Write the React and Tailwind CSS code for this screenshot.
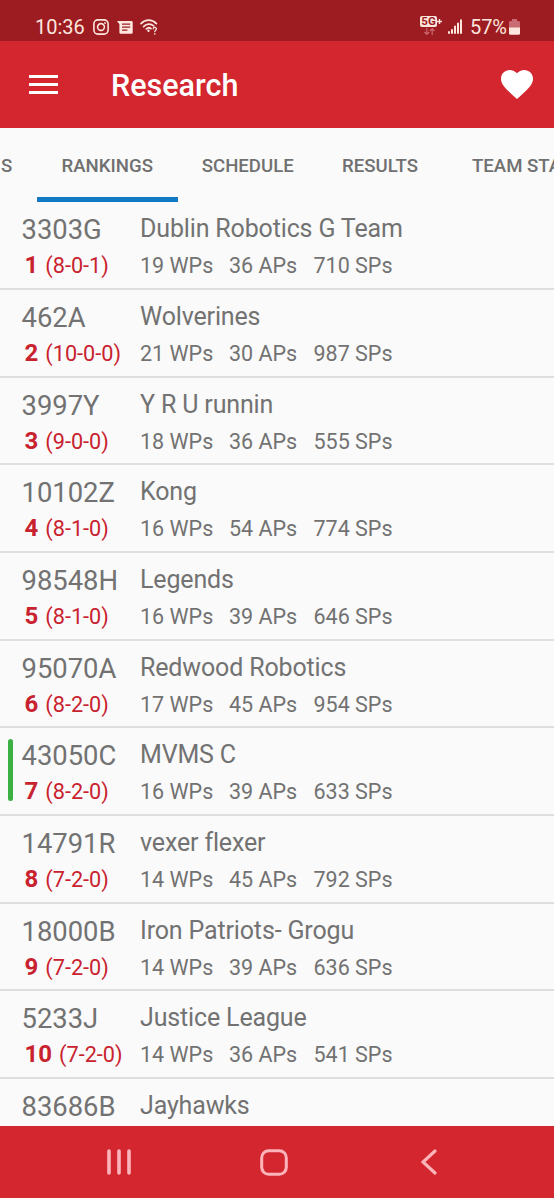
import React from 'react';

const tabs = [
  { label: 'S', className: 'w-[37px] pl-px' },
  { label: 'RANKINGS', className: 'w-[140.5px] justify-center', active: true },
  { label: 'SCHEDULE', className: 'w-[140.5px] justify-center' },
  { label: 'RESULTS', className: 'w-[124px] justify-center' },
  { label: 'TEAM STATS', className: 'w-[160px] pl-[30px]' },
];

const rankings = [
  { team: '3303G', name: 'Dublin Robotics G Team', record: '8-0-1', wp: 19, ap: 36, sp: 710 },
  { team: '462A', name: 'Wolverines', record: '10-0-0', wp: 21, ap: 30, sp: 987 },
  { team: '3997Y', name: 'Y R U runnin', record: '9-0-0', wp: 18, ap: 36, sp: 555 },
  { team: '10102Z', name: 'Kong', record: '8-1-0', wp: 16, ap: 54, sp: 774 },
  { team: '98548H', name: 'Legends', record: '8-1-0', wp: 16, ap: 39, sp: 646 },
  { team: '95070A', name: 'Redwood Robotics', record: '8-2-0', wp: 17, ap: 45, sp: 954 },
  { team: '43050C', name: 'MVMS C', record: '8-2-0', wp: 16, ap: 39, sp: 633, highlighted: true },
  { team: '14791R', name: 'vexer flexer', record: '7-2-0', wp: 14, ap: 45, sp: 792 },
  { team: '18000B', name: 'Iron Patriots- Grogu', record: '7-2-0', wp: 14, ap: 39, sp: 636 },
  { team: '5233J', name: 'Justice League', record: '7-2-0', wp: 14, ap: 36, sp: 541 },
  { team: '83686B', name: 'Jayhawks' },
];

const StatusBar = () => (
  <div className="flex h-[41px] shrink-0 items-start justify-between bg-[#9c1c22] pl-[35px] pr-[34px] pt-[15px] text-[#fde6dd]">
    <div className="flex items-start">
      <span className="w-[58px] text-[20px] leading-6">10:36</span>
      <svg className="mt-1 h-4 w-4" viewBox="0 0 16 16" fill="none" stroke="currentColor" strokeWidth="1.6">
        <rect x="0.9" y="0.9" width="14.2" height="14.2" rx="4" />
        <circle cx="8" cy="8" r="3.4" />
        <circle cx="12" cy="4" r="0.9" fill="currentColor" stroke="none" />
      </svg>
      <svg className="ml-2 mt-1.5 h-[13px] w-4" viewBox="0 0 16 13">
        <path d="M0 0h14.5a1.2 1.2 0 0 1 1.2 1.2v10.4a1.2 1.2 0 0 1-1.2 1.2H3.6a1.2 1.2 0 0 1-1.2-1.2V3.2z" fill="currentColor" />
        <path d="M5 3.2h8.2M5 6.2h8.2M5 9.2h5.4" stroke="#9c1c22" strokeWidth="1.3" />
      </svg>
      <svg className="ml-[7px] mt-1 h-4 w-[18px]" viewBox="0 0 18 16" fill="none" stroke="currentColor" strokeWidth="1.7" strokeLinecap="round">
        <path d="M1 4.6C5.4 0 12 0 16.4 4.6M3.6 7.6c3-3.2 7.4-3.2 10.2-.6M6.2 10c1.6-1.5 3.4-1.5 4.8-.4" />
        <circle cx="8.5" cy="11.8" r="1.2" fill="currentColor" stroke="none" />
        <path d="M13.2 9.8c.2-2 3.4-1.7 3.2.2-.1 1.2-1.6 1.2-1.6 2.6" strokeWidth="1.3" />
        <circle cx="14.8" cy="14.9" r="0.8" fill="currentColor" stroke="none" />
      </svg>
    </div>
    <div className="flex items-start">
      <div className="w-7 pt-px">
        <div className="flex items-center">
          <span className="flex h-[11px] w-[17px] items-center justify-center rounded-[2px] bg-[#fde6dd] text-[11.5px] font-bold leading-none text-[#9c1c22]">5G</span>
          <svg className="h-[5px] w-[5px]" viewBox="0 0 5 5" stroke="currentColor" strokeWidth="1.4">
            <path d="M2.5 0v5M0 2.5h5" />
          </svg>
        </div>
        <svg className="ml-1 mt-px h-[7px] w-[11px]" viewBox="0 0 11 7" fill="none" stroke="#cf6e74" strokeWidth="1.1">
          <path d="M2.8 0v6.2M.4 4l2.4 2.3L5.2 4M8.2 7V.8M5.8 3l2.4-2.3L10.6 3" />
        </svg>
      </div>
      <svg className="mt-1 h-[15px] w-[14px]" viewBox="0 0 14 15" stroke="currentColor" strokeWidth="2" strokeLinecap="round">
        <path d="M1 13v1M4 11v3M7 7.6V14M10 4.4V14M13 1.2V14" />
      </svg>
      <span className="ml-2 w-[39px] text-[20px] leading-6 tracking-[-0.1px]">57%</span>
      <svg className="mt-1 h-4 w-[11px]" viewBox="0 0 11 16">
        <path d="M3 0h5v2h1.6A1.4 1.4 0 0 1 11 3.4V9H0V3.4A1.4 1.4 0 0 1 1.4 2H3z" fill="#c86b72" />
        <path d="M0 8.6h11v5.6a1.6 1.6 0 0 1-1.6 1.6H1.6A1.6 1.6 0 0 1 0 14.2z" fill="currentColor" />
      </svg>
    </div>
  </div>
);

const Header = () => (
  <header className="flex h-[86.5px] shrink-0 items-center bg-[#d3262f] pl-[28.5px] pr-[21px] text-white">
    <div className="flex w-[29.5px] flex-col gap-[5px]">
      <div className="h-[3px] bg-white"></div>
      <div className="h-[3px] bg-white"></div>
      <div className="h-[3px] bg-white"></div>
    </div>
    <h1 className="ml-[53px] flex-1 pt-1 text-[30.5px] font-medium leading-9">Research</h1>
    <svg className="h-[29px] w-8" viewBox="2 3 20 18.35" preserveAspectRatio="none" fill="currentColor">
      <path d="M12 21.35l-1.45-1.32C5.4 15.36 2 12.28 2 8.5 2 5.42 4.42 3 7.5 3c1.74 0 3.41.81 4.5 2.09C13.09 3.81 14.76 3 16.5 3 19.58 3 22 5.42 22 8.5c0 3.78-3.4 6.86-8.55 11.54L12 21.35z" />
    </svg>
  </header>
);

const RankingRow = ({ entry, rank }) => (
  <div className="relative flex h-[87.68px] shrink-0 border-b-2 border-[#dedede] pl-[21.5px] pt-[11px] text-[#727272]">
    {entry.highlighted && (
      <div className="absolute left-2 top-[11px] h-[62px] w-[5px] rounded-full bg-[#3bb143]"></div>
    )}
    <div className="w-[118.5px] whitespace-nowrap">
      <div className="text-[27.4px] leading-[34px]">{entry.team}</div>
      {entry.record && (
        <div className="flex items-baseline gap-[7px] pl-[3px] leading-9 text-[#c9222f]">
          <span className="text-[24px] font-bold">{rank}</span>
          <span className="text-[21.7px]">({entry.record})</span>
        </div>
      )}
    </div>
    <div className="whitespace-nowrap">
      <div className="text-[25px] leading-8 tracking-[-0.15px]">{entry.name}</div>
      {entry.record && (
        <div className="flex pt-[3px] text-[21.5px] leading-9">
          <span className="w-[89px]">{entry.wp} WPs</span>
          <span className="w-[84.5px]">{entry.ap} APs</span>
          <span>{entry.sp} SPs</span>
        </div>
      )}
    </div>
  </div>
);

const NavigationBar = () => (
  <nav className="flex h-[72px] shrink-0 items-center bg-[#d3262f] pl-[106px] text-[#fbb5ba]">
    <svg className="h-[26px] w-[26px]" viewBox="0 0 26 26" stroke="currentColor" strokeWidth="3.6" strokeLinecap="round">
      <path d="M3 2v22M13 2v22M23 2v22" />
    </svg>
    <svg className="ml-[128px] h-[27px] w-7" viewBox="0 0 28 27" fill="none" stroke="currentColor" strokeWidth="3">
      <rect x="1.7" y="1.7" width="24.6" height="23.6" rx="7" />
    </svg>
    <svg className="ml-[133px] h-[26px] w-4" viewBox="0 0 16 26" fill="none" stroke="currentColor" strokeWidth="3.2" strokeLinecap="round">
      <path d="M14 2L2 13l12 11" />
    </svg>
  </nav>
);

const App = () => {
  return (
    <div className="flex h-[1200px] w-[554px] flex-col overflow-hidden bg-[#fafafa] font-['Roboto',sans-serif]">
      <StatusBar />
      <Header />

      <div className="flex h-[74.8px] shrink-0 overflow-hidden text-[18.6px] font-medium text-[#707070]">
        {tabs.map(tab => (
          <div
            key={tab.label}
            className={`flex shrink-0 items-center whitespace-nowrap border-b-5 pt-2.5 ${tab.active ? 'border-[#1279c4]' : 'border-transparent'} ${tab.className}`}
          >
            {tab.label}
          </div>
        ))}
      </div>

      <main className="flex min-h-0 flex-1 flex-col overflow-hidden">
        {rankings.map((entry, index) => (
          <RankingRow key={entry.team} entry={entry} rank={index + 1} />
        ))}
      </main>

      <NavigationBar />
      <div className="h-0.5 shrink-0 bg-[#fafafa]"></div>
    </div>
  );
};

export default App;
